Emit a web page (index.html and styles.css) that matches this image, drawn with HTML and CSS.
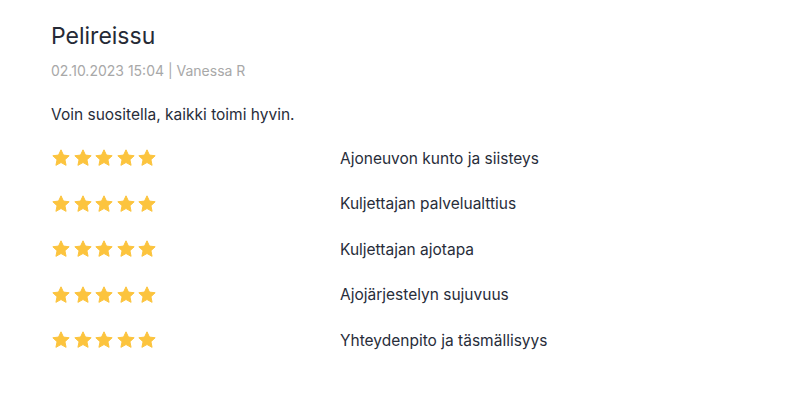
FILE: index.html
```html
<!DOCTYPE html>
<html>
<head>
<meta charset="utf-8">
<link rel="stylesheet" href="styles.css">
</head>
<body>
<div class="review">
  <h1 class="title">Pelireissu</h1>
  <div class="meta">02.10.2023 15:04 | Vanessa R</div>
  <p class="text">Voin suositella, kaikki toimi hyvin.</p>
  <div class="ratings">
    <div class="row"><div class="stars" data-n="5"></div><div class="label">Ajoneuvon kunto ja siisteys</div></div>
    <div class="row"><div class="stars" data-n="5"></div><div class="label">Kuljettajan palvelualttius</div></div>
    <div class="row"><div class="stars" data-n="5"></div><div class="label">Kuljettajan ajotapa</div></div>
    <div class="row"><div class="stars" data-n="5"></div><div class="label">Ajojärjestelyn sujuvuus</div></div>
    <div class="row"><div class="stars" data-n="5"></div><div class="label">Yhteydenpito ja täsmällisyys</div></div>
  </div>
</div>
<script>
document.querySelectorAll('.stars').forEach(function(el){
  var n = +el.dataset.n, html='';
  for (var i=0;i<5;i++) html += '<svg class="star" viewBox="0 0 24 24"><path d="M12 2.2l2.95 6.3 6.85.8-5.07 4.7 1.35 6.8L12 17.4l-6.08 3.4 1.35-6.8L2.2 9.3l6.85-.8z" fill="#fcc43e" stroke="#fcc43e" stroke-width="1.2" stroke-linejoin="round"/></svg>';
  el.innerHTML = html;
});
</script>
</body>
</html>
```
FILE: styles.css
```css
html, body { margin: 0; padding: 0; background: #fff; }
body { font-family: Inter, "Noto Sans", sans-serif; color: #282d3a; }
.review { padding: 20px 51px; }
.title { margin: 0; font-size: 23px; font-weight: 400; line-height: 32px; color: #262a36; }
.meta { margin-top: 9px; font-size: 14px; line-height: 20px; color: #a8a8a8; }
.text { margin: 22px 0 0; font-size: 15.5px; line-height: 24px; color: #282d3a; }
.ratings { margin-top: 19px; display: flex; flex-direction: column; gap: 21.6px; }
.row { display: flex; align-items: center; height: 24px; }
.stars { width: 289px; display: flex; gap: 1.5px; }
.star { width: 20px; height: 20px; display: block; }
.label { font-size: 15.5px; color: #282d3a; }
```
